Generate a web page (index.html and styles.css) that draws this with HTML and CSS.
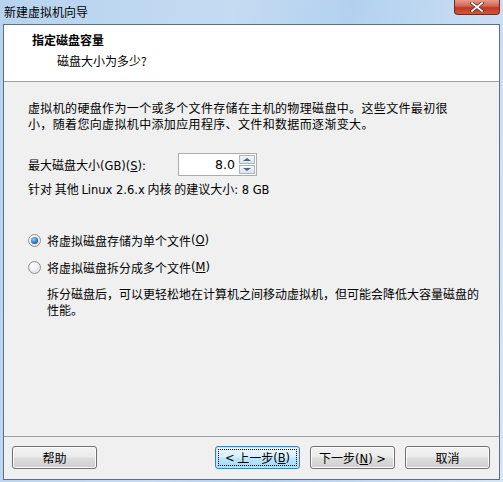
FILE: index.html
```html
<!DOCTYPE html>
<html lang="zh-CN">
<head>
    <meta charset="UTF-8">
    <title>新建虚拟机向导</title>
    <link rel="stylesheet" href="styles.css">
</head>
<body>
    <div class="window">
        <div class="titlebar">
            <span class="title">新建虚拟机向导</span>
            <div class="close">
                <svg width="16" height="10" viewBox="0 0 16 10">
                    <path d="M3 1 L13 9 M13 1 L3 9" stroke="#5a2a22" stroke-width="3.4" stroke-linecap="square"/>
                    <path d="M3 1 L13 9 M13 1 L3 9" stroke="#fff" stroke-width="1.8" stroke-linecap="square"/>
                </svg>
            </div>
        </div>
        <div class="client">
            <div class="header">
                <div class="header-title">指定磁盘容量</div>
                <div class="header-sub">磁盘大小为多少?</div>
            </div>
            <div class="content">
                <p class="intro">虚拟机的硬盘作为一个或多个文件存储在主机的物理磁盘中。这些文件最初很<br>小，随着您向虚拟机中添加应用程序、文件和数据而逐渐变大。</p>
                <div class="size-row">
                    <span class="label">最大磁盘大小<span class="lat">(GB)(<u>S</u>):</span></span>
                    <div class="spin">
                        <div class="spin-value">8.0</div>
                        <div class="spin-arrows">
                            <div class="arrow up"><span></span></div>
                            <div class="arrow down"><span></span></div>
                        </div>
                    </div>
                </div>
                <p class="hint">针对 其他 <span class="lat">Linux 2.6.x</span> 内核 的建议大小<span class="lat">: 8 GB</span></p>
                <div class="options">
                    <label class="radio checked"><span class="dot"></span>将虚拟磁盘存储为单个文件<span class="lat">(<u>O</u>)</span></label>
                    <label class="radio"><span class="dot"></span>将虚拟磁盘拆分成多个文件<span class="lat">(<u>M</u>)</span></label>
                    <p class="desc">拆分磁盘后，可以更轻松地在计算机之间移动虚拟机，但可能会降低大容量磁盘的<br>性能。</p>
                </div>
            </div>
            <div class="footer">
                <button class="btn">帮助</button>
                <div class="nav">
                    <button class="btn focus"><span class="focus-ring"><span class="lat">&lt;</span>&nbsp;上一步<span class="lat">(<u>B</u>)</span></span></button>
                    <button class="btn">下一步<span class="lat">(<u>N</u>) &gt;</span></button>
                    <button class="btn">取消</button>
                </div>
            </div>
        </div>
    </div>
</body>
</html>
```

FILE: styles.css
```css
* {
    box-sizing: border-box;
}
html, body {
    margin: 0;
    padding: 0;
}
body {
    width: 503px;
    height: 482px;
    font-family: "Noto Sans CJK SC", "Liberation Sans", sans-serif;
    font-size: 12px;
    color: #000;
    background: #bcd6ef;
    overflow: hidden;
}
.lat {
    font-family: "DejaVu Sans", "Noto Sans CJK SC", sans-serif;
    font-size: 11.5px;
}
.window {
    display: flex;
    flex-direction: column;
    height: 482px;
    padding: 0 3px 2px 3px;
    background: linear-gradient(100deg, #b7d3ef 0%, #c4dbf2 40%, #b3d1ef 60%, #d6e6f6 100%);
}
.titlebar {
    height: 24px;
    display: flex;
    justify-content: space-between;
    align-items: flex-start;
}
.title {
    margin: 4px 0 0 1px;
    line-height: 16px;
    color: #000;
}
.close {
    width: 46px;
    height: 15px;
    border: 1px solid #6e2a22;
    border-top: none;
    border-radius: 0 0 4px 4px;
    background: linear-gradient(#e59c8c 0%, #d3624c 45%, #c0391f 55%, #cd5a3e 100%);
    display: flex;
    justify-content: center;
    align-items: center;
}
.client {
    flex: 1;
    display: flex;
    flex-direction: column;
    background: #f0f0f0;
    border: 1px solid #5c6f86;
}
.header {
    height: 57px;
    background: #fff;
    border-bottom: 1px solid #a0a0a0;
    padding: 7px 0 0 28px;
}
.header-title {
    font-weight: bold;
    line-height: 16px;
    height: 18px;
}
.header-sub {
    padding-left: 25px;
    line-height: 18px;
    margin-top: 2px;
}
.content {
    flex: 1;
    padding: 18px 0 0 24px;
}
.intro {
    margin: 0;
    line-height: 16px;
    letter-spacing: 0.35px;
}
.size-row {
    display: flex;
    align-items: center;
    margin-top: 21px;
    height: 23px;
}
.label {
    width: 150px;
}
.spin {
    display: flex;
    width: 79px;
    height: 23px;
    border: 1px solid #abadb3;
    background: #fff;
}
.spin-value {
    flex: 1;
    text-align: right;
    padding-right: 3px;
    line-height: 21px;
    font-family: "DejaVu Sans", sans-serif;
    font-size: 12.5px;
}
.spin-arrows {
    width: 18px;
    display: flex;
    flex-direction: column;
    padding: 1px;
    gap: 1px;
}
.arrow {
    flex: 1;
    border: 1px solid #a9b6c8;
    background: linear-gradient(#f4f6f9, #dde3ec);
    display: flex;
    justify-content: center;
    align-items: center;
}
.arrow span {
    width: 0;
    height: 0;
    border-left: 4px solid transparent;
    border-right: 4px solid transparent;
}
.up span {
    border-bottom: 3px solid #4d6185;
}
.down span {
    border-top: 3px solid #4d6185;
}
.hint {
    margin: 4px 0 0 0;
    line-height: 18px;
}
.options {
    margin-top: 33px;
}
.radio {
    display: flex;
    align-items: center;
    height: 16px;
    margin-bottom: 11px;
}
.dot {
    width: 13px;
    height: 13px;
    border-radius: 50%;
    border: 1px solid #8e8f8f;
    background: radial-gradient(circle at 40% 35%, #ffffff, #d9dade);
    margin: 0 6px 0 0;
    display: flex;
    justify-content: center;
    align-items: center;
}
.radio.checked .dot::after {
    content: "";
    width: 7px;
    height: 7px;
    border-radius: 50%;
    background: radial-gradient(circle at 40% 35%, #8ad0ff, #1a5fa8 70%, #0d3e7a);
}
.desc {
    margin: 0 0 0 19px;
    line-height: 16px;
}
.footer {
    height: 43px;
    border-top: 1px solid #a0a0a0;
    display: flex;
    justify-content: space-between;
    align-items: flex-start;
    padding: 9px 9px 0 8px;
}
.nav {
    display: flex;
    gap: 10px;
}
.btn {
    font: inherit;
    width: 85px;
    height: 23px;
    padding: 0;
    border: 1px solid #707070;
    border-radius: 3px;
    background: linear-gradient(#f2f2f2 0%, #ebebeb 48%, #dddddd 52%, #cfcfcf 100%);
    color: #000;
    box-shadow: inset 0 0 0 1px #fcfcfc;
}
.btn.focus {
    border-color: #3c7fb1;
    background: linear-gradient(#eaf6fd 0%, #d9f0fc 48%, #bee6fd 52%, #a7d9f5 100%);
    box-shadow: inset 0 0 0 1px #c4e5f6;
    padding: 2px;
}
.focus-ring {
    display: flex;
    justify-content: center;
    align-items: center;
    height: 100%;
    border: 1px dotted #000;
}
```
